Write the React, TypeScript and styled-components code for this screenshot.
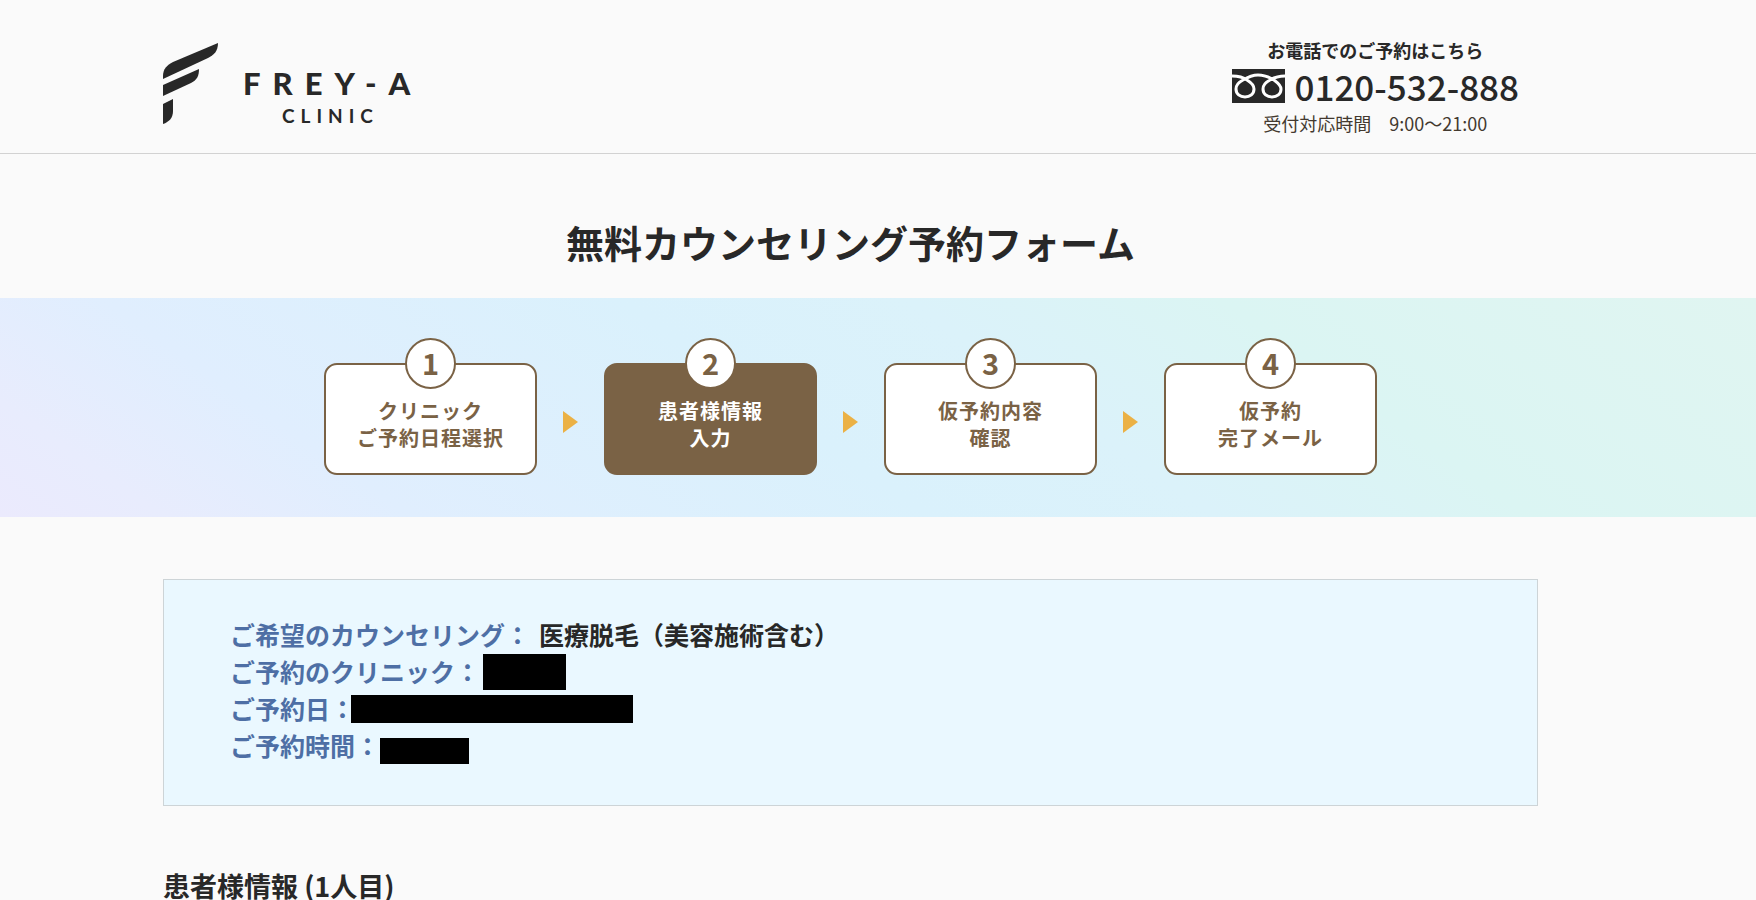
import React from "react";
import styled, { createGlobalStyle } from "styled-components";

const ink = "#282828";
const brown = "#7a6245";
const jp = `"Noto Sans CJK JP", sans-serif`;

const GlobalStyle = createGlobalStyle`
  *, *::before, *::after { box-sizing: border-box; }
  body {
    margin: 0;
    background: #fafafa;
    color: ${ink};
    font-family: ${jp};
  }
  h1, h2, p, ol, dl, dd { margin: 0; padding: 0; }
`;

const Page = styled.div`
  min-width: 1240px;
`;

const Header = styled.header`
  display: flex;
  justify-content: space-between;
  align-items: flex-start;
  padding: 37px 237px 16px 163px;
  border-bottom: 1px solid #d2d2d2;
`;

const Brand = styled.a`
  display: flex;
  gap: 25px;
  padding-top: 6px;
  color: ${ink};
  text-decoration: none;
`;

const Wordmark = styled.span`
  display: flex;
  flex-direction: column;
  gap: 4px;
  padding-top: 24px;
  font-family: Lato, sans-serif;
`;

const BrandName = styled.span`
  font-size: 31px;
  font-weight: 900;
  line-height: 32px;
  letter-spacing: 12px;
`;

const BrandKind = styled.span`
  padding-left: 39px;
  font-size: 19px;
  font-weight: 700;
  line-height: 25px;
  letter-spacing: 6px;
`;

const Contact = styled.div`
  display: flex;
  flex-direction: column;
  align-items: center;
`;

const ContactLead = styled.p`
  font-size: 18px;
  font-weight: 700;
  line-height: 26px;
`;

const PhoneLink = styled.a`
  display: flex;
  align-items: center;
  gap: 10px;
  color: ${ink};
  font-size: 35px;
  font-weight: 500;
  line-height: 46px;
  text-decoration: none;
`;

const Hours = styled.p`
  color: #43392f;
  font-size: 18px;
  font-weight: 400;
  line-height: 28px;
`;

const Title = styled.h1`
  padding: 60px 55px 28px 0;
  font-size: 38px;
  font-weight: 700;
  line-height: 56px;
  text-align: center;
`;

const StepBand = styled.section`
  padding: 65px 55px 42px 0;
  background: linear-gradient(
    35deg,
    #ebeafd 0%,
    #e8ecfd 8%,
    #e0eefe 20%,
    #daf1fc 45%,
    #dbf2fa 59%,
    #dbf5f3 74%,
    #e0f5f1 100%
  );
`;

const StepList = styled.ol`
  display: flex;
  justify-content: center;
  gap: 26px;
  list-style: none;
`;

const Step = styled.li`
  display: flex;
  align-items: center;
  gap: 26px;
`;

const StepCard = styled.div<{ $current?: boolean }>`
  position: relative;
  display: flex;
  flex-direction: column;
  align-items: center;
  width: 213px;
  height: 112px;
  padding-top: 32px;
  border: 2px solid ${brown};
  border-radius: 13px;
  background: ${(p) => (p.$current ? brown : "#fff")};
  color: ${(p) => (p.$current ? "#fff" : brown)};
  font-size: 20px;
  font-weight: 700;
  line-height: 27px;
  letter-spacing: 1px;
`;

const StepNumber = styled.span`
  position: absolute;
  top: -27px;
  display: flex;
  align-items: center;
  justify-content: center;
  width: 51px;
  height: 51px;
  padding-bottom: 3px;
  border: 2px solid ${brown};
  border-radius: 50%;
  background: #fff;
  color: ${brown};
  font-size: 29px;
  font-weight: 700;
  letter-spacing: 0;
`;

const StepArrow = styled.svg`
  display: block;
  margin-top: 6px;
`;

const Content = styled.main`
  padding: 62px 218px 0 163px;
`;

const Summary = styled.dl`
  padding: 36px 66px 41px;
  border: 1px solid #cdd4d7;
  background: #eaf8ff;
  font-size: 25px;
  font-weight: 700;
  line-height: 37px;
`;

const SummaryRow = styled.div`
  display: flex;
  align-items: center;
  height: 37px;
`;

const SummaryLabel = styled.dt`
  color: #4e6fa5;
`;

const SummaryValue = styled.dd`
  padding-left: 9px;
`;

const Redaction = styled.dd<{
  $width: number;
  $height: number;
  $shift?: number;
  $low?: boolean;
}>`
  && {
    margin-left: ${(p) => p.$shift ?? 0}px;
  }
  align-self: ${(p) => (p.$low ? "flex-end" : "center")};
  width: ${(p) => p.$width}px;
  height: ${(p) => p.$height}px;
  background: #000;
`;

const SectionTitle = styled.h2`
  padding-top: 60px;
  font-size: 27px;
  font-weight: 700;
  line-height: 40px;
`;

const steps = [
  { lines: ["クリニック", "ご予約日程選択"] },
  { lines: ["患者様情報", "入力"], current: true },
  { lines: ["仮予約内容", "確認"] },
  { lines: ["仮予約", "完了メール"] },
];

function BrandMark() {
  return (
    <svg width="55" height="82" viewBox="0 0 55 82" fill={ink} aria-hidden="true">
      <path d="M0 36V33C0 26 4 22 10 19L55 0C55 8 51 12 45 15Z" />
      <path d="M0 53V42L36 26C36 33 34 37 28 40Z" />
      <path d="M0 81V61L10 56V68C10 75 6 79 0 81Z" />
    </svg>
  );
}

function FreeDialMark() {
  return (
    <svg width="53" height="34" viewBox="0 0 53 34" aria-hidden="true">
      <rect width="53" height="34" fill={ink} />
      <path
        d="M0 7C7 7 11 8 15 11C20 14 22 17 22 20C22 25 18 28 13 28C8 28 4 25 4 20C4 16 7 13 11 11C16 8 20 6 26 6C33 6 37 8 42 11C46 14 49 17 49 20C49 25 45 28 40 28C35 28 31 25 31 20C31 16 34 13 38 11C43 8 47 7 53 7"
        fill="none"
        stroke="#fff"
        strokeWidth="3"
      />
    </svg>
  );
}

export default function App() {
  return (
    <Page>
      <GlobalStyle />
      <Header>
        <Brand href="#">
          <BrandMark />
          <Wordmark>
            <BrandName>FREY-A</BrandName>
            <BrandKind>CLINIC</BrandKind>
          </Wordmark>
        </Brand>
        <Contact>
          <ContactLead>お電話でのご予約はこちら</ContactLead>
          <PhoneLink href="tel:0120532888">
            <FreeDialMark />
            0120-532-888
          </PhoneLink>
          <Hours>受付対応時間　9:00〜21:00</Hours>
        </Contact>
      </Header>

      <Title>無料カウンセリング予約フォーム</Title>

      <StepBand>
        <StepList>
          {steps.map((step, i) => (
            <Step key={i} aria-current={step.current ? "step" : undefined}>
              <StepCard $current={step.current}>
                <StepNumber>{i + 1}</StepNumber>
                {step.lines.map((line) => (
                  <span key={line}>{line}</span>
                ))}
              </StepCard>
              {i < steps.length - 1 && (
                <StepArrow width="15" height="22" viewBox="0 0 15 22" aria-hidden="true">
                  <path d="M0 0L15 11L0 22Z" fill="#ebb145" />
                </StepArrow>
              )}
            </Step>
          ))}
        </StepList>
      </StepBand>

      <Content>
        <Summary>
          <SummaryRow>
            <SummaryLabel>ご希望のカウンセリング：</SummaryLabel>
            <SummaryValue>医療脱毛（美容施術含む）</SummaryValue>
          </SummaryRow>
          <SummaryRow>
            <SummaryLabel>ご予約のクリニック：</SummaryLabel>
            <Redaction $width={83} $height={36} $shift={3} />
          </SummaryRow>
          <SummaryRow>
            <SummaryLabel>ご予約日：</SummaryLabel>
            <Redaction $width={282} $height={28} $shift={-4} />
          </SummaryRow>
          <SummaryRow>
            <SummaryLabel>ご予約時間：</SummaryLabel>
            <Redaction $width={89} $height={26} $low />
          </SummaryRow>
        </Summary>
        <SectionTitle>患者様情報 (1人目)</SectionTitle>
      </Content>
    </Page>
  );
}
